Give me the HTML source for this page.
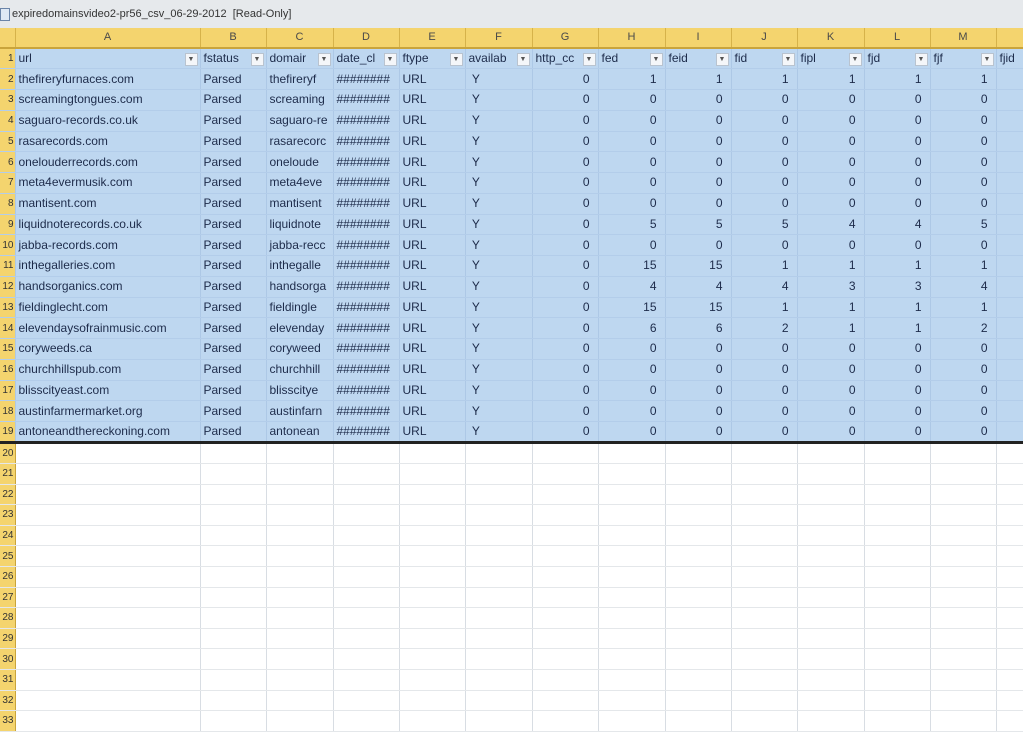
<!DOCTYPE html>
<html><head><meta charset="utf-8"><style>
body{margin:0;width:1023px;height:720px;overflow:hidden;background:#fff;font-family:"Liberation Sans",sans-serif;color:#1d2b4a;position:relative}
.title{position:absolute;left:0;top:0;width:1023px;height:28px;background:#e6e9ec;font-size:11px;line-height:28px;color:#333;}
.title span{position:absolute;left:12px}
.title i{position:absolute;left:0;top:8px;width:8px;height:11px;border:1px solid #6a84a8;background:#dfe9f5}
table{position:absolute;left:0;top:28px;width:1023px;border-collapse:collapse;table-layout:fixed;font-size:12px}
td{padding:0 3px;height:20.75px;box-sizing:border-box;border-right:1px solid #d8dde3;border-bottom:1px solid #e4e7ea;white-space:nowrap;overflow:hidden;line-height:19px}
tr.h td{background:#f4d46e;text-align:center;font-size:11px;height:20px;border-right:1px solid #d6b24a;border-bottom:2px solid #c9a43c;color:#4a4a4a}
td.n{background:#f4d46e;font-size:10px;padding:0 1px 0 0;color:#333;border-right:1px solid #c9a43c;text-align:right;direction:rtl}
tr.d td{background:#bed7f0;border-right:1px solid #adc8e6;border-bottom:1px solid #b3cdea}
tr.d td.n{background:#f4d46e}
tr.d td.r{text-align:right;padding-right:8px}
tr.last td{border-bottom:3px solid #222}
tr.e td{height:20.6px}
tr.f td{position:relative;padding-right:16px}
tr.f td.n{padding:0 1px 0 0}
tr.f td b{position:absolute;right:2px;top:4px;width:11px;height:11px;background:#f4f6f9;border:1px solid #b9c3cf;font-size:7px;line-height:11px;text-align:center;color:#555;font-weight:normal}
</style></head><body>
<div class="title"><i></i><span>expiredomainsvideo2-pr56_csv_06-29-2012 &nbsp;[Read-Only]</span></div>
<table>
<colgroup><col style="width:15px"><col style="width:185px"><col style="width:66px"><col style="width:67px"><col style="width:66px"><col style="width:66px"><col style="width:67px"><col style="width:66px"><col style="width:67px"><col style="width:66px"><col style="width:66px"><col style="width:67px"><col style="width:66px"><col style="width:66px"><col style="width:27px"></colgroup>
<tr class="h"><td class="n"></td><td>A</td><td>B</td><td>C</td><td>D</td><td>E</td><td>F</td><td>G</td><td>H</td><td>I</td><td>J</td><td>K</td><td>L</td><td>M</td><td></td></tr>
<tr class="d f"><td class="n">1</td><td>url<b>▼</b></td><td>fstatus<b>▼</b></td><td>domair<b>▼</b></td><td>date_cl<b>▼</b></td><td>ftype<b>▼</b></td><td>availab<b>▼</b></td><td>http_cc<b>▼</b></td><td>fed<b>▼</b></td><td>feid<b>▼</b></td><td>fid<b>▼</b></td><td>fipl<b>▼</b></td><td>fjd<b>▼</b></td><td>fjf<b>▼</b></td><td>fjid</td></tr>
<tr class="d"><td class="n">2</td><td>thefireryfurnaces.com</td><td>Parsed</td><td>thefireryf</td><td>########</td><td>URL</td><td>&nbsp;Y</td><td class="r">0</td><td class="r">1</td><td class="r">1</td><td class="r">1</td><td class="r">1</td><td class="r">1</td><td class="r">1</td><td></td></tr>
<tr class="d"><td class="n">3</td><td>screamingtongues.com</td><td>Parsed</td><td>screaming</td><td>########</td><td>URL</td><td>&nbsp;Y</td><td class="r">0</td><td class="r">0</td><td class="r">0</td><td class="r">0</td><td class="r">0</td><td class="r">0</td><td class="r">0</td><td></td></tr>
<tr class="d"><td class="n">4</td><td>saguaro-records.co.uk</td><td>Parsed</td><td>saguaro-re</td><td>########</td><td>URL</td><td>&nbsp;Y</td><td class="r">0</td><td class="r">0</td><td class="r">0</td><td class="r">0</td><td class="r">0</td><td class="r">0</td><td class="r">0</td><td></td></tr>
<tr class="d"><td class="n">5</td><td>rasarecords.com</td><td>Parsed</td><td>rasarecorc</td><td>########</td><td>URL</td><td>&nbsp;Y</td><td class="r">0</td><td class="r">0</td><td class="r">0</td><td class="r">0</td><td class="r">0</td><td class="r">0</td><td class="r">0</td><td></td></tr>
<tr class="d"><td class="n">6</td><td>onelouderrecords.com</td><td>Parsed</td><td>oneloude</td><td>########</td><td>URL</td><td>&nbsp;Y</td><td class="r">0</td><td class="r">0</td><td class="r">0</td><td class="r">0</td><td class="r">0</td><td class="r">0</td><td class="r">0</td><td></td></tr>
<tr class="d"><td class="n">7</td><td>meta4evermusik.com</td><td>Parsed</td><td>meta4eve</td><td>########</td><td>URL</td><td>&nbsp;Y</td><td class="r">0</td><td class="r">0</td><td class="r">0</td><td class="r">0</td><td class="r">0</td><td class="r">0</td><td class="r">0</td><td></td></tr>
<tr class="d"><td class="n">8</td><td>mantisent.com</td><td>Parsed</td><td>mantisent</td><td>########</td><td>URL</td><td>&nbsp;Y</td><td class="r">0</td><td class="r">0</td><td class="r">0</td><td class="r">0</td><td class="r">0</td><td class="r">0</td><td class="r">0</td><td></td></tr>
<tr class="d"><td class="n">9</td><td>liquidnoterecords.co.uk</td><td>Parsed</td><td>liquidnote</td><td>########</td><td>URL</td><td>&nbsp;Y</td><td class="r">0</td><td class="r">5</td><td class="r">5</td><td class="r">5</td><td class="r">4</td><td class="r">4</td><td class="r">5</td><td></td></tr>
<tr class="d"><td class="n">10</td><td>jabba-records.com</td><td>Parsed</td><td>jabba-recc</td><td>########</td><td>URL</td><td>&nbsp;Y</td><td class="r">0</td><td class="r">0</td><td class="r">0</td><td class="r">0</td><td class="r">0</td><td class="r">0</td><td class="r">0</td><td></td></tr>
<tr class="d"><td class="n">11</td><td>inthegalleries.com</td><td>Parsed</td><td>inthegalle</td><td>########</td><td>URL</td><td>&nbsp;Y</td><td class="r">0</td><td class="r">15</td><td class="r">15</td><td class="r">1</td><td class="r">1</td><td class="r">1</td><td class="r">1</td><td></td></tr>
<tr class="d"><td class="n">12</td><td>handsorganics.com</td><td>Parsed</td><td>handsorga</td><td>########</td><td>URL</td><td>&nbsp;Y</td><td class="r">0</td><td class="r">4</td><td class="r">4</td><td class="r">4</td><td class="r">3</td><td class="r">3</td><td class="r">4</td><td></td></tr>
<tr class="d"><td class="n">13</td><td>fieldinglecht.com</td><td>Parsed</td><td>fieldingle</td><td>########</td><td>URL</td><td>&nbsp;Y</td><td class="r">0</td><td class="r">15</td><td class="r">15</td><td class="r">1</td><td class="r">1</td><td class="r">1</td><td class="r">1</td><td></td></tr>
<tr class="d"><td class="n">14</td><td>elevendaysofrainmusic.com</td><td>Parsed</td><td>elevenday</td><td>########</td><td>URL</td><td>&nbsp;Y</td><td class="r">0</td><td class="r">6</td><td class="r">6</td><td class="r">2</td><td class="r">1</td><td class="r">1</td><td class="r">2</td><td></td></tr>
<tr class="d"><td class="n">15</td><td>coryweeds.ca</td><td>Parsed</td><td>coryweed</td><td>########</td><td>URL</td><td>&nbsp;Y</td><td class="r">0</td><td class="r">0</td><td class="r">0</td><td class="r">0</td><td class="r">0</td><td class="r">0</td><td class="r">0</td><td></td></tr>
<tr class="d"><td class="n">16</td><td>churchhillspub.com</td><td>Parsed</td><td>churchhill</td><td>########</td><td>URL</td><td>&nbsp;Y</td><td class="r">0</td><td class="r">0</td><td class="r">0</td><td class="r">0</td><td class="r">0</td><td class="r">0</td><td class="r">0</td><td></td></tr>
<tr class="d"><td class="n">17</td><td>blisscityeast.com</td><td>Parsed</td><td>blisscitye</td><td>########</td><td>URL</td><td>&nbsp;Y</td><td class="r">0</td><td class="r">0</td><td class="r">0</td><td class="r">0</td><td class="r">0</td><td class="r">0</td><td class="r">0</td><td></td></tr>
<tr class="d"><td class="n">18</td><td>austinfarmermarket.org</td><td>Parsed</td><td>austinfarn</td><td>########</td><td>URL</td><td>&nbsp;Y</td><td class="r">0</td><td class="r">0</td><td class="r">0</td><td class="r">0</td><td class="r">0</td><td class="r">0</td><td class="r">0</td><td></td></tr>
<tr class="d last"><td class="n">19</td><td>antoneandthereckoning.com</td><td>Parsed</td><td>antonean</td><td>########</td><td>URL</td><td>&nbsp;Y</td><td class="r">0</td><td class="r">0</td><td class="r">0</td><td class="r">0</td><td class="r">0</td><td class="r">0</td><td class="r">0</td><td></td></tr>
<tr class="e"><td class="n">20</td><td></td><td></td><td></td><td></td><td></td><td></td><td></td><td></td><td></td><td></td><td></td><td></td><td></td><td></td></tr>
<tr class="e"><td class="n">21</td><td></td><td></td><td></td><td></td><td></td><td></td><td></td><td></td><td></td><td></td><td></td><td></td><td></td><td></td></tr>
<tr class="e"><td class="n">22</td><td></td><td></td><td></td><td></td><td></td><td></td><td></td><td></td><td></td><td></td><td></td><td></td><td></td><td></td></tr>
<tr class="e"><td class="n">23</td><td></td><td></td><td></td><td></td><td></td><td></td><td></td><td></td><td></td><td></td><td></td><td></td><td></td><td></td></tr>
<tr class="e"><td class="n">24</td><td></td><td></td><td></td><td></td><td></td><td></td><td></td><td></td><td></td><td></td><td></td><td></td><td></td><td></td></tr>
<tr class="e"><td class="n">25</td><td></td><td></td><td></td><td></td><td></td><td></td><td></td><td></td><td></td><td></td><td></td><td></td><td></td><td></td></tr>
<tr class="e"><td class="n">26</td><td></td><td></td><td></td><td></td><td></td><td></td><td></td><td></td><td></td><td></td><td></td><td></td><td></td><td></td></tr>
<tr class="e"><td class="n">27</td><td></td><td></td><td></td><td></td><td></td><td></td><td></td><td></td><td></td><td></td><td></td><td></td><td></td><td></td></tr>
<tr class="e"><td class="n">28</td><td></td><td></td><td></td><td></td><td></td><td></td><td></td><td></td><td></td><td></td><td></td><td></td><td></td><td></td></tr>
<tr class="e"><td class="n">29</td><td></td><td></td><td></td><td></td><td></td><td></td><td></td><td></td><td></td><td></td><td></td><td></td><td></td><td></td></tr>
<tr class="e"><td class="n">30</td><td></td><td></td><td></td><td></td><td></td><td></td><td></td><td></td><td></td><td></td><td></td><td></td><td></td><td></td></tr>
<tr class="e"><td class="n">31</td><td></td><td></td><td></td><td></td><td></td><td></td><td></td><td></td><td></td><td></td><td></td><td></td><td></td><td></td></tr>
<tr class="e"><td class="n">32</td><td></td><td></td><td></td><td></td><td></td><td></td><td></td><td></td><td></td><td></td><td></td><td></td><td></td><td></td></tr>
<tr class="e"><td class="n">33</td><td></td><td></td><td></td><td></td><td></td><td></td><td></td><td></td><td></td><td></td><td></td><td></td><td></td><td></td></tr>
</table>
</body></html>
